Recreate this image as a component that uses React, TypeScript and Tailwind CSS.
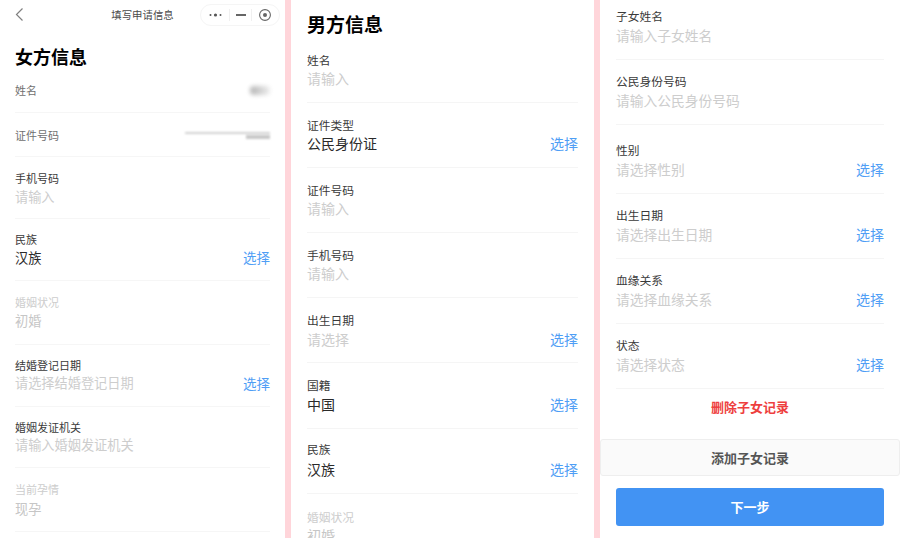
import React from "react";

const font = { fontFamily: '"Noto Sans CJK SC", "Noto Sans", sans-serif' };

type Kind = "placeholder" | "filled" | "disabled";

function valueColor(kind: Kind) {
  if (kind === "filled") return "text-[#2a2a2a]";
  if (kind === "disabled") return "text-[#c6c6c6]";
  return "text-[#cdcdcd]";
}

function SmallRow({
  box,
  valueBox = "h-[22px]",
  label,
  value,
  kind = "placeholder",
  pick,
}: {
  box: string;
  valueBox?: string;
  label: string;
  value: string;
  kind?: Kind;
  pick?: boolean;
}) {
  return (
    <div className={`mx-[15px] border-b border-[#f6f6f6] ${box}`}>
      <div className={`h-4 text-[11px] leading-4 ${kind === "disabled" ? "text-[#cdcdcd]" : "text-[#3a3a3a]"}`}>{label}</div>
      <div className={`flex items-center justify-between text-[13.2px] ${valueBox}`}>
        <span className={valueColor(kind)}>{value}</span>
        {pick && <span className="text-[13.5px] text-[#4f9ef5]">选择</span>}
      </div>
    </div>
  );
}

function BigRow({
  box = "h-[65px] pt-[14px]",
  valueBox = "h-[21px]",
  size = "text-[14px]",
  label,
  value,
  kind = "placeholder",
  pick,
}: {
  box?: string;
  valueBox?: string;
  size?: string;
  label: string;
  value: string;
  kind?: Kind;
  pick?: boolean;
}) {
  return (
    <div className={`border-b border-[#f5f5f5] ${box}`}>
      <div className={`h-4 text-[11.75px] leading-4 ${kind === "disabled" ? "text-[#cdcdcd]" : "text-[#3a3a3a]"}`}>{label}</div>
      <div className={`flex items-center justify-between ${size} ${valueBox}`}>
        <span className={valueColor(kind)}>{value}</span>
        {pick && <span className="text-[14px] text-[#4f9ef5]">选择</span>}
      </div>
    </div>
  );
}

export default function App() {
  return (
    <div className="flex h-[538px] w-[900px] overflow-hidden bg-[#ffd5da]" style={font}>
      <div className="h-full w-[285px] shrink-0 overflow-hidden bg-white">
        <div className="relative flex h-[30px] items-center justify-center text-[10.4px] text-[#4a4a4a]">
          <svg className="absolute left-[14px] top-[7px]" width="10" height="15" viewBox="0 0 10 15" fill="none" stroke="#808080" strokeWidth="1.2">
            <path d="M8.5 1.5 2.5 7.5 8.5 13.5" />
          </svg>
          <span>填写申请信息</span>
          <div className="absolute left-[200px] top-[4px] flex h-[22px] w-[80px] items-center justify-between rounded-full border border-[#f5f5f5] pl-[8px] pr-[7px]">
            <svg width="14" height="6" viewBox="0 0 14 6" fill="#555555">
              <circle cx="1.5" cy="3" r="1" />
              <circle cx="6.5" cy="3" r="1.6" />
              <circle cx="11.5" cy="3" r="1" />
            </svg>
            <div className="h-3 w-px bg-[#f0f0f0]" />
            <div className="h-[2px] w-[10px] bg-[#666666]" />
            <div className="h-3 w-px bg-[#f0f0f0]" />
            <svg width="14" height="14" viewBox="0 0 14 14" fill="none" stroke="#666666" strokeWidth="1.1">
              <circle cx="7" cy="7" r="5.4" />
              <circle cx="7" cy="7" r="2" fill="#666666" stroke="none" />
            </svg>
          </div>
        </div>
        <div className="h-[38px] px-[15px] pt-[15px]">
          <div className="h-[22px] text-[18px] font-bold leading-[22px] text-black">女方信息</div>
        </div>
        <div className="mx-[15px] flex h-[45px] items-center justify-between border-b border-[#f6f6f6] pt-[1px] text-[11px] text-[#707070]">
          <span>姓名</span>
          <div className="h-[9px] w-[20px] rounded-sm bg-linear-to-r from-[#b4b4b4] to-[#eeeeee] blur-[2px]" />
        </div>
        <div className="mx-[15px] flex h-[44px] items-center justify-between border-b border-[#f6f6f6] pt-[1px] text-[11px] text-[#707070]">
          <span>证件号码</span>
          <div className="flex w-[85px] flex-col items-end gap-[1px] blur-[1px]">
            <div className="h-[2px] w-[85px] bg-[#d2d2d2]" />
            <div className="h-[4px] w-[24px] bg-[#c8c8c8]" />
          </div>
        </div>
        <SmallRow box="h-[62px] pt-[13px]" label="手机号码" value="请输入" />
        <SmallRow box="h-[62px] pt-[12px]" valueBox="h-[21px]" label="民族" value="汉族" kind="filled" pick />
        <SmallRow box="h-[64px] pt-[13px]" label="婚姻状况" value="初婚" kind="disabled" />
        <SmallRow box="h-[62px] pt-[12px]" valueBox="h-[20px]" label="结婚登记日期" value="请选择结婚登记日期" pick />
        <SmallRow box="h-[61px] pt-[12px]" valueBox="h-[20px]" label="婚姻发证机关" value="请输入婚姻发证机关" />
        <SmallRow box="h-[64px] pt-[13px]" valueBox="h-[24px]" label="当前孕情" value="现孕" kind="disabled" />
      </div>

      <div className="ml-[6px] h-full w-[303px] shrink-0 overflow-hidden bg-white px-4">
        <div className="h-[38px] pt-[12px]">
          <div className="h-6 text-[19px] font-bold leading-6 text-black">男方信息</div>
        </div>
        <BigRow label="姓名" value="请输入" />
        <BigRow label="证件类型" value="公民身份证" kind="filled" pick />
        <BigRow label="证件号码" value="请输入" />
        <BigRow label="手机号码" value="请输入" />
        <BigRow label="出生日期" value="请选择" valueBox="h-[22px]" pick />
        <BigRow box="h-[66px] pt-[14px]" valueBox="h-[22px]" label="国籍" value="中国" kind="filled" pick />
        <BigRow box="h-[65px] pt-[12px]" valueBox="h-[24px]" label="民族" value="汉族" kind="filled" pick />
        <BigRow box="h-[65px] pt-[15px]" label="婚姻状况" value="初婚" kind="disabled" />
      </div>

      <div className="ml-[6px] h-full w-[300px] shrink-0 overflow-hidden bg-white">
        <div className="px-4">
          <BigRow box="h-[60px] pt-[8px]" valueBox="h-[22px]" size="text-[13.75px]" label="子女姓名" value="请输入子女姓名" />
          <BigRow box="h-[65px] pt-[13px]" valueBox="h-[22px]" size="text-[13.75px]" label="公民身份号码" value="请输入公民身份号码" />
          <BigRow box="h-[69px] pt-[17px]" valueBox="h-[22px]" size="text-[13.75px]" label="性别" value="请选择性别" pick />
          <BigRow box="h-[65px] pt-[13px]" valueBox="h-[22px]" size="text-[13.75px]" label="出生日期" value="请选择出生日期" pick />
          <BigRow box="h-[65px] pt-[13px]" valueBox="h-[22px]" size="text-[13.75px]" label="血缘关系" value="请选择血缘关系" pick />
          <BigRow box="h-[65px] pt-[13px]" valueBox="h-[22px]" size="text-[13.75px]" label="状态" value="请选择状态" pick />
          <div className="flex h-[35px] items-center justify-center text-[13px] font-bold text-[#ee3f3f]">删除子女记录</div>
        </div>
        <div className="mt-[15px] flex h-[37px] items-center justify-center rounded-[3px] border border-[#eeeeee] bg-[#fafafa] text-[13px] font-bold text-[#555555]">
          添加子女记录
        </div>
        <div className="mx-4 mt-[12px] flex h-[38px] items-center justify-center rounded-[3px] bg-[#4293f3] text-[13px] font-bold text-white">
          下一步
        </div>
      </div>
    </div>
  );
}
